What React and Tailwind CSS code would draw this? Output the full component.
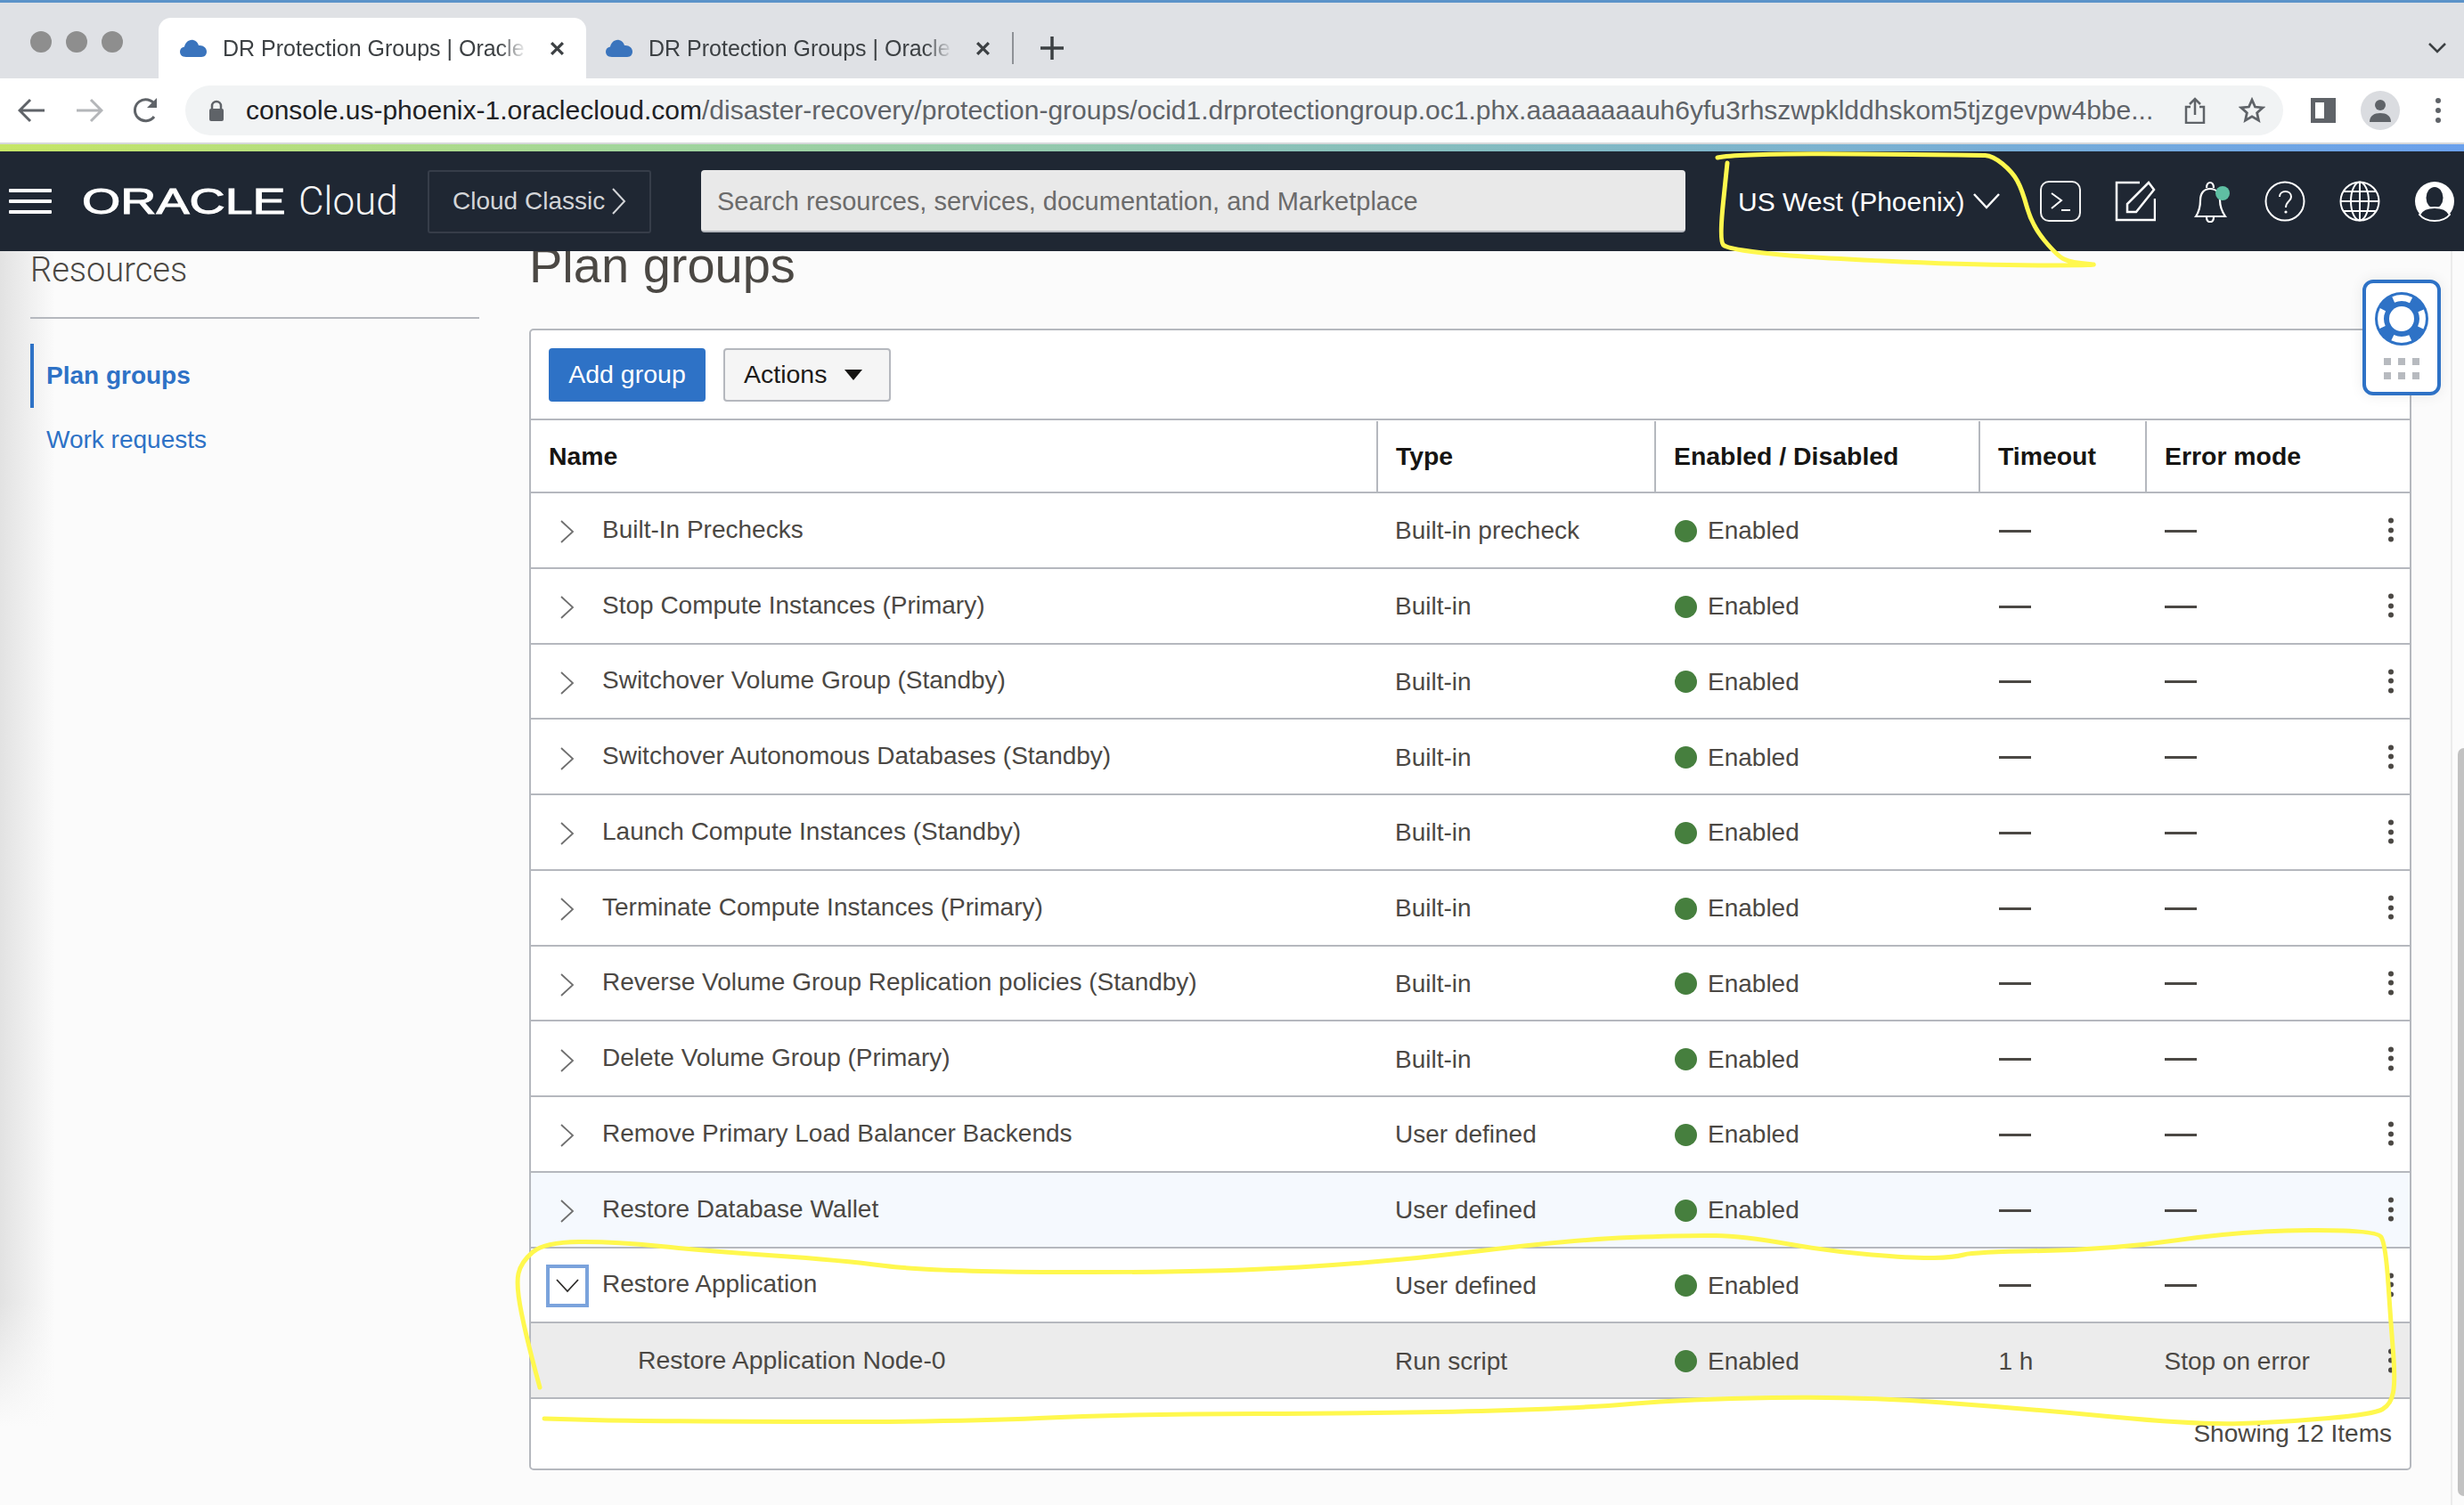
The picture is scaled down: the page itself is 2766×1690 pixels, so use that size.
import React from 'react';

const rows = [
  { name: 'Built-In Prechecks', type: 'Built-in precheck' },
  { name: 'Stop Compute Instances (Primary)', type: 'Built-in' },
  { name: 'Switchover Volume Group (Standby)', type: 'Built-in' },
  { name: 'Switchover Autonomous Databases (Standby)', type: 'Built-in' },
  { name: 'Launch Compute Instances (Standby)', type: 'Built-in' },
  { name: 'Terminate Compute Instances (Primary)', type: 'Built-in' },
  { name: 'Reverse Volume Group Replication policies (Standby)', type: 'Built-in' },
  { name: 'Delete Volume Group (Primary)', type: 'Built-in' },
  { name: 'Remove Primary Load Balancer Backends', type: 'User defined' },
];

// hand drawn marker strokes, in page coordinates
const loopTop = [[1928,177],[1955,172],[2220,174],[2237,175],[2259,193],[2270,213],[2281,253],[2309,287],[2325,295],[2366,298],[2231,298],[2038,290],[1939,280],[1930,270],[1939,183]];
const loopBottom = [[606,1558],[592,1507],[579,1443],[585,1417],[611,1395],[688,1394],[796,1405],[943,1415],[1045,1428],[1357,1429],[1560,1417],[1766,1392],[1894,1387],[1957,1388],[2053,1405],[2149,1413],[2193,1412],[2216,1406],[2372,1403],[2518,1382],[2668,1381],[2678,1397],[2684,1487],[2689,1550],[2684,1577],[2665,1588],[2563,1597],[2467,1600],[2276,1582],[2085,1568],[1894,1571],[1766,1582],[1560,1587],[1262,1588],[1070,1597],[719,1596],[611,1593]];

function smooth(pts) {
  let d = `M${pts[0][0]} ${pts[0][1]}`;
  for (let i = 1; i < pts.length - 1; i++) {
    const mx = (pts[i][0] + pts[i + 1][0]) / 2;
    const my = (pts[i][1] + pts[i + 1][1]) / 2;
    d += ` Q${pts[i][0]} ${pts[i][1]} ${mx} ${my}`;
  }
  const last = pts[pts.length - 1];
  return d + ` L${last[0]} ${last[1]}`;
}

function CloudIcon() {
  return (
    <svg width="30" height="20" viewBox="0 0 30 20" className="shrink-0">
      <path d="M7 20C2 20 0 17 0 14c0-3 2-5 5-5.500C6 4 10 0 15 1c3 .5 5 3 6 6 5-.5 9 2.500 9 7 0 3-2 6-6 6z" fill="#3a74bd" />
    </svg>
  );
}

function CloseX() {
  return (
    <svg width="17" height="17" viewBox="0 0 16 16" className="shrink-0">
      <path d="M2 2l12 12M14 2L2 14" stroke="#3c4043" strokeWidth="3" />
    </svg>
  );
}

function Tab({ active }) {
  return (
    <div className={`flex items-center h-[68px] ${active ? 'w-[480px] bg-white rounded-t-[14px] pl-[24px] pr-[24px]' : 'w-[478px] pl-[22px] pr-[24px]'}`}>
      <CloudIcon />
      <span className="ml-[18px] w-[352px] text-[25px] leading-[30px] text-[#3c4043] whitespace-nowrap overflow-hidden [mask-image:linear-gradient(90deg,#000_88%,transparent_97%)]">DR Protection Groups | Oracle Cloud</span>
      <span className="ml-auto"><CloseX /></span>
    </div>
  );
}

function BrowserChrome() {
  return (
    <div>
      <div className="h-[3px] bg-[#5b93c9]" />
      <div className="h-[85px] bg-[#dfe1e5] flex items-end relative">
        <div className="flex gap-[16px] pl-[34px] pr-[40px] h-[68px] pt-[15px] w-[178px]">
          <span className="w-[24px] h-[24px] rounded-full bg-[#8e8e8e]" />
          <span className="w-[24px] h-[24px] rounded-full bg-[#8e8e8e]" />
          <span className="w-[24px] h-[24px] rounded-full bg-[#8e8e8e]" />
        </div>
        <Tab active />
        <Tab />
        <div className="w-[2px] h-[36px] bg-[#8e9196] mb-[16px]" />
        <svg width="26" height="26" viewBox="0 0 26 26" className="ml-[30px] mb-[21px]">
          <path d="M13 0v26M0 13h26" stroke="#3c4043" strokeWidth="3.500" />
        </svg>
        <svg width="20" height="12" viewBox="0 0 20 12" className="ml-auto mr-[20px] mb-[28px]">
          <path d="M1 1l9 9 9-9" fill="none" stroke="#3c4043" strokeWidth="2.500" />
        </svg>
      </div>
      <div className="h-[72px] bg-white flex items-center">
        <svg width="32" height="28" viewBox="0 0 32 28" className="ml-[20px]">
          <path d="M30 14H3M14 2L2 14l12 12" fill="none" stroke="#5f6368" strokeWidth="3" />
        </svg>
        <svg width="32" height="28" viewBox="0 0 32 28" className="ml-[32px]">
          <path d="M2 14h27M18 2l12 12-12 12" fill="none" stroke="#b4b6b9" strokeWidth="3" />
        </svg>
        <svg width="32" height="30" viewBox="0 0 32 30" className="ml-[32px]">
          <path d="M25 22a12 12 0 1 1 1-13" fill="none" stroke="#5f6368" strokeWidth="3" />
          <path d="M28 1v11H17z" fill="#5f6368" />
        </svg>
        <div className="ml-[28px] w-[2355px] h-[56px] rounded-full bg-[#f1f3f4] flex items-center">
          <svg width="18" height="24" viewBox="0 0 18 24" className="ml-[26px] shrink-0">
            <path d="M4 11V7a5 5 0 0 1 10 0v4" fill="none" stroke="#5f6368" strokeWidth="2.500" />
            <rect x="1" y="10" width="16" height="14" rx="2" fill="#5f6368" />
          </svg>
          <span className="ml-[24px] w-[2150px] text-[30px] leading-[36px] whitespace-nowrap overflow-hidden text-[#5f6368]">
            <span className="text-[#202124]">console.us-phoenix-1.oraclecloud.com</span>/disaster-recovery/protection-groups/ocid1.drprotectiongroup.oc1.phx.aaaaaaaauh6yfu3rhszwpklddhskom5tjzgevpw4bbe...
          </span>
          <svg width="24" height="30" viewBox="0 0 24 30" className="ml-[26px] shrink-0">
            <path d="M7 11H2v18h20V11h-5M12 20V2M6 8l6-6 6 6" fill="none" stroke="#5f6368" strokeWidth="2.500" />
          </svg>
          <svg width="30" height="30" viewBox="0 0 24 24" className="ml-[37px] shrink-0">
            <path d="M12 2.500l2.800 6.300 6.900.7-5.200 4.600 1.500 6.800-6-3.500-6 3.500 1.500-6.800L2.300 9.500l6.900-.7z" fill="none" stroke="#5f6368" strokeWidth="2.200" />
          </svg>
        </div>
        <div className="ml-[31px] w-[28px] h-[28px] border-[5px] border-r-[13px] border-[#5f6368]" />
        <div className="ml-[28px] w-[44px] h-[44px] rounded-full bg-[#dadce0] flex items-center justify-center">
          <svg width="24" height="26" viewBox="0 0 24 26">
            <circle cx="12" cy="7" r="6" fill="#5f6368" />
            <path d="M0 26c0-7 5-10 12-10s12 3 12 10z" fill="#5f6368" />
          </svg>
        </div>
        <div className="ml-[40px] flex flex-col gap-[5px]">
          <span className="w-[6px] h-[6px] rounded-full bg-[#5f6368]" />
          <span className="w-[6px] h-[6px] rounded-full bg-[#5f6368]" />
          <span className="w-[6px] h-[6px] rounded-full bg-[#5f6368]" />
        </div>
      </div>
      <div className="h-[2px] bg-[#d6d8da]" />
      <div className="h-[8px] bg-[linear-gradient(90deg,#c6e666_0%,#a2d69a_25%,#84bcc0_60%,#6aa0ec_100%)]" />
    </div>
  );
}

function NavBar() {
  return (
    <div className="h-[112px] bg-[#1f2733] flex items-center relative z-10 text-white">
      <div className="ml-[10px] w-[48px] flex flex-col gap-[8px]">
        <span className="h-[4px] bg-white rounded-[1px]" />
        <span className="h-[4px] bg-white rounded-[1px]" />
        <span className="h-[4px] bg-white rounded-[1px]" />
      </div>
      <div className="ml-[34px] w-[243px] text-[40px] leading-[44px] origin-left scale-x-[1.39] [-webkit-text-stroke:1px_white]">
        ORACLE
      </div>
      <div className="text-[44px] leading-[44px] text-[#f4f4f4] w-[145px] font-['Roboto'] font-light">Cloud</div>
      <div className="w-[251px] h-[71px] border-2 border-[#363d49] rounded-[3px] flex items-center pl-[26px] text-[28px] text-[#d3d5d8]">
        Cloud Classic
        <svg width="16" height="30" viewBox="0 0 16 30" className="ml-[8px]">
          <path d="M1 1l13 14L1 29" fill="none" stroke="#d3d5d8" strokeWidth="2" />
        </svg>
      </div>
      <div className="ml-[56px] w-[1105px] h-[70px] bg-[#e9e9e9] border-b-2 border-[#b5b8be] rounded-[4px] flex items-center pl-[18px] pt-[3px] text-[29px] text-[#6b6b6b]">
        Search resources, services, documentation, and Marketplace
      </div>
      <div className="ml-[59px] text-[30px] whitespace-nowrap">US West (Phoenix)</div>
      <svg width="30" height="18" viewBox="0 0 30 18" className="ml-[9px]">
        <path d="M1 1l14 15L29 1" fill="none" stroke="white" strokeWidth="2.500" />
      </svg>
      <svg width="46" height="46" viewBox="0 0 46 46" className="ml-[45px]">
        <rect x="1" y="1" width="44" height="44" rx="9" fill="none" stroke="#f0f0f0" strokeWidth="2" />
        <path d="M13 14l11 8-11 9M24 33h10" fill="none" stroke="white" strokeWidth="2" />
      </svg>
      <svg width="46" height="46" viewBox="0 0 46 46" className="ml-[38px]">
        <path d="M28 2H2v42h43V20" fill="none" stroke="white" strokeWidth="2.500" />
        <path d="M38 2l6 8-20 25-10 0 0-9z" fill="#1f2733" stroke="white" strokeWidth="2.500" />
      </svg>
      <svg width="46" height="48" viewBox="0 0 46 48" className="ml-[41px]">
        <path d="M4 41c4-6 5-11 5-18 0-8 4-13 11-13s11 5 11 13c0 7 2 12 6 18z" fill="none" stroke="white" strokeWidth="2.200" />
        <path d="M16 9c0-8 8-8 8 0M16 42c0 7 8 7 8 0" fill="none" stroke="white" strokeWidth="2.200" />
        <ellipse cx="34" cy="15" rx="8" ry="8" fill="#5fbfa3" />
      </svg>
      <svg width="46" height="46" viewBox="0 0 46 46" className="ml-[35px]">
        <circle cx="23" cy="23" r="21.500" fill="none" stroke="white" strokeWidth="2" />
        <path d="M17 18c0-8 13-8 13 0 0 5-6 5-6 12" fill="none" stroke="white" strokeWidth="2" />
        <circle cx="24" cy="35" r="1.600" fill="white" />
      </svg>
      <svg width="46" height="46" viewBox="0 0 46 46" className="ml-[38px]">
        <circle cx="23" cy="23" r="21.500" fill="none" stroke="white" strokeWidth="2" />
        <ellipse cx="23" cy="23" rx="10" ry="21.500" fill="none" stroke="white" strokeWidth="2" />
        <path d="M23 1v44M2 23h42M5 12h36M5 34h36" fill="none" stroke="white" strokeWidth="2" />
      </svg>
      <svg width="46" height="46" viewBox="0 0 46 46" className="ml-[38px]">
        <circle cx="23" cy="23" r="22" fill="white" />
        <ellipse cx="23" cy="19" rx="9.500" ry="12" fill="#1f2733" />
        <path d="M6 38c3-6 9-8 17-8s14 2 17 8c-4 5-10 7-17 7s-13-2-17-7z" fill="#1f2733" stroke="white" strokeWidth="2" />
      </svg>
    </div>
  );
}

function Chevron({ open }) {
  if (open) {
    return (
      <div className="w-[48px] h-[48px] border-[4px] border-[#7ba3dc] flex items-center justify-center shrink-0">
        <svg width="26" height="16" viewBox="0 0 26 16">
          <path d="M1 1l12 13L25 1" fill="none" stroke="#2e2c2a" strokeWidth="1.800" />
        </svg>
      </div>
    );
  }
  return (
    <div className="w-[48px] h-[48px] flex items-center justify-center shrink-0 mt-[2px]">
      <svg width="16" height="26" viewBox="0 0 16 26">
        <path d="M1 1l13 12L1 25" fill="none" stroke="#6f6f6f" strokeWidth="1.800" />
      </svg>
    </div>
  );
}

function Kebab() {
  return (
    <div className="absolute right-[18px] top-1/2 -translate-y-1/2 flex flex-col gap-[4.500px]">
      <span className="w-[6px] h-[6px] rounded-full bg-[#4b4844]" />
      <span className="w-[6px] h-[6px] rounded-full bg-[#4b4844]" />
      <span className="w-[6px] h-[6px] rounded-full bg-[#4b4844]" />
    </div>
  );
}

function Row({ name, type, bg = '', chevron = true, open = false, timeout, errorMode }) {
  return (
    <div className={`flex items-center h-[84.75px] border-b-2 border-[#b5b8be] relative text-[28px] text-[#4b4844] pt-[2px] ${bg}`}>
      <div className={`w-[951px] flex items-center ${chevron ? 'pl-[17px]' : 'pl-[120px]'}`}>
        {chevron && <Chevron open={open} />}
        <span className={`${chevron ? 'ml-[15px]' : 'text-[28.400px]'} -mt-[3px] whitespace-nowrap`}>{name}</span>
      </div>
      <div className="w-[312px] pl-[19px]">{type}</div>
      <div className="w-[364px] pl-[21px] flex items-center">
        <span className="w-[25px] h-[25px] rounded-full bg-[#467f3e]" />
        <span className="ml-[12px]">Enabled</span>
      </div>
      <div className="w-[187px] pl-[20.500px]">
        {timeout ? timeout : <div className="w-[36px] h-[3px] bg-[#4b4844]" />}
      </div>
      <div className="pl-[19.500px]">
        {errorMode ? errorMode : <div className="w-[36px] h-[3px] bg-[#4b4844]" />}
      </div>
      <Kebab />
    </div>
  );
}

function HeadCell({ label, width }) {
  return (
    <div className={`${width} h-full pl-[20px] flex items-center border-r-2 border-[#b5b8be] last:border-r-0`}>
      {label}
    </div>
  );
}

function Panel() {
  return (
    <div className="w-[2113px] h-[1282px] mt-[38px] bg-white border-2 border-[#b5b8be] rounded-[5px] flex flex-col">
      <div className="h-[101px] border-b-2 border-[#b5b8be] flex items-center pl-[20px]">
        <button className="w-[176px] h-[60px] bg-[#2e72c6] rounded-[4px] text-white text-[28.500px]">Add group</button>
        <button className="ml-[20px] w-[188px] h-[60px] bg-[#f5f5f5] border-2 border-[#b5b8be] rounded-[4px] text-[#1d1b19] text-[28.500px] flex items-center pl-[21px]">
          Actions
          <svg width="20" height="12" viewBox="0 0 20 12" className="ml-[20px]">
            <path d="M0 0h20L10 12z" fill="#161513" />
          </svg>
        </button>
      </div>
      <div className="h-[82px] border-b-2 border-[#b5b8be] flex text-[28.400px] font-bold text-[#161513] pt-[1px]">
        <HeadCell label="Name" width="w-[951px]" />
        <HeadCell label="Type" width="w-[312px]" />
        <HeadCell label="Enabled / Disabled" width="w-[364px]" />
        <HeadCell label="Timeout" width="w-[187px]" />
        <HeadCell label="Error mode" width="flex-1" />
      </div>
      {rows.map((row) => (
        <Row key={row.name} name={row.name} type={row.type} />
      ))}
      <Row name="Restore Database Wallet" type="User defined" bg="bg-[#f5f9fe]" />
      <Row name="Restore Application" type="User defined" open />
      <Row name="Restore Application Node-0" type="Run script" bg="bg-[#ececec]" chevron={false} timeout="1 h" errorMode="Stop on error" />
      <div className="flex-1 flex justify-end pt-[18px] pr-[20px] text-[28px] text-[#4b4844]">Showing 12 Items</div>
    </div>
  );
}

function Sidebar() {
  return (
    <div className="w-[594px] shrink-0 pl-[34px] pr-[56px] bg-[linear-gradient(180deg,transparent_1180px,#fbfbfb_1320px),linear-gradient(90deg,#e2e2e2,#fbfbfb_62px)]">
      <div className="text-[38px] leading-[44px] -mt-[1px] text-[#4b4844] font-['Roboto'] font-light">Resources</div>
      <div className="h-[2px] bg-[#b5b8be] mt-[31px]" />
      <div className="mt-[28px] h-[72px] border-l-[4px] border-[#2e72c6] pl-[14px] flex items-center text-[28px] font-bold text-[#2e72c6]">Plan groups</div>
      <div className="h-[72px] pl-[18px] flex items-center text-[28px] text-[#2e72c6]">Work requests</div>
    </div>
  );
}

function HelpWidget() {
  return (
    <div className="absolute left-[2652px] top-[314px] w-[88px] h-[130px] bg-white border-[4px] border-[#2e72c6] rounded-[12px] z-10 flex flex-col items-center shadow-[0_0_16px_rgba(0,0,0,0.08)]">
      <svg width="60" height="60" viewBox="0 0 60 60" className="mt-[10px]">
        <circle cx="30" cy="30" r="30" fill="#2e72c6" />
        <circle cx="30" cy="30" r="23.500" fill="none" stroke="white" strokeWidth="7" strokeDasharray="20.500 16.410" strokeDashoffset="10.250" />
        <circle cx="30" cy="30" r="14" fill="white" />
      </svg>
      <div className="mt-[14px] grid grid-cols-3 gap-x-[8px] gap-y-[8px]">
        {[0, 1, 2, 3, 4, 5].map((i) => (
          <span key={i} className="w-[8px] h-[8px] bg-[#b7babf]" />
        ))}
      </div>
    </div>
  );
}

export default function App() {
  return (
    <div className="w-[2766px] h-[1690px] relative overflow-hidden bg-[#fbfbfb] font-['Liberation_Sans',Arial,sans-serif]">
      <BrowserChrome />
      <NavBar />
      <div className="flex h-[1408px] overflow-hidden">
        <Sidebar />
        <div className="flex-1 -mt-[17px]">
          <div className="text-[56px] leading-[66px] text-[#4b4844]">Plan groups</div>
          <Panel />
        </div>
        <div className="w-[15px] shrink-0 border-l-2 border-[#ebebeb] bg-[#fbfbfb] flex flex-col justify-end">
          <div className="ml-[6px] h-[840px] bg-[#c2c2c2] rounded-l-[8px] mb-[10px]" />
        </div>
      </div>
      <HelpWidget />
      <svg width="2766" height="1690" viewBox="0 0 2766 1690" className="absolute left-0 top-0 z-20 pointer-events-none">
        <path d={smooth(loopTop)} fill="none" stroke="#fff84e" strokeWidth="5" strokeLinecap="round" strokeLinejoin="round" />
        <path d={smooth(loopBottom)} fill="none" stroke="#fff84e" strokeWidth="5" strokeLinecap="round" strokeLinejoin="round" />
      </svg>
    </div>
  );
}
